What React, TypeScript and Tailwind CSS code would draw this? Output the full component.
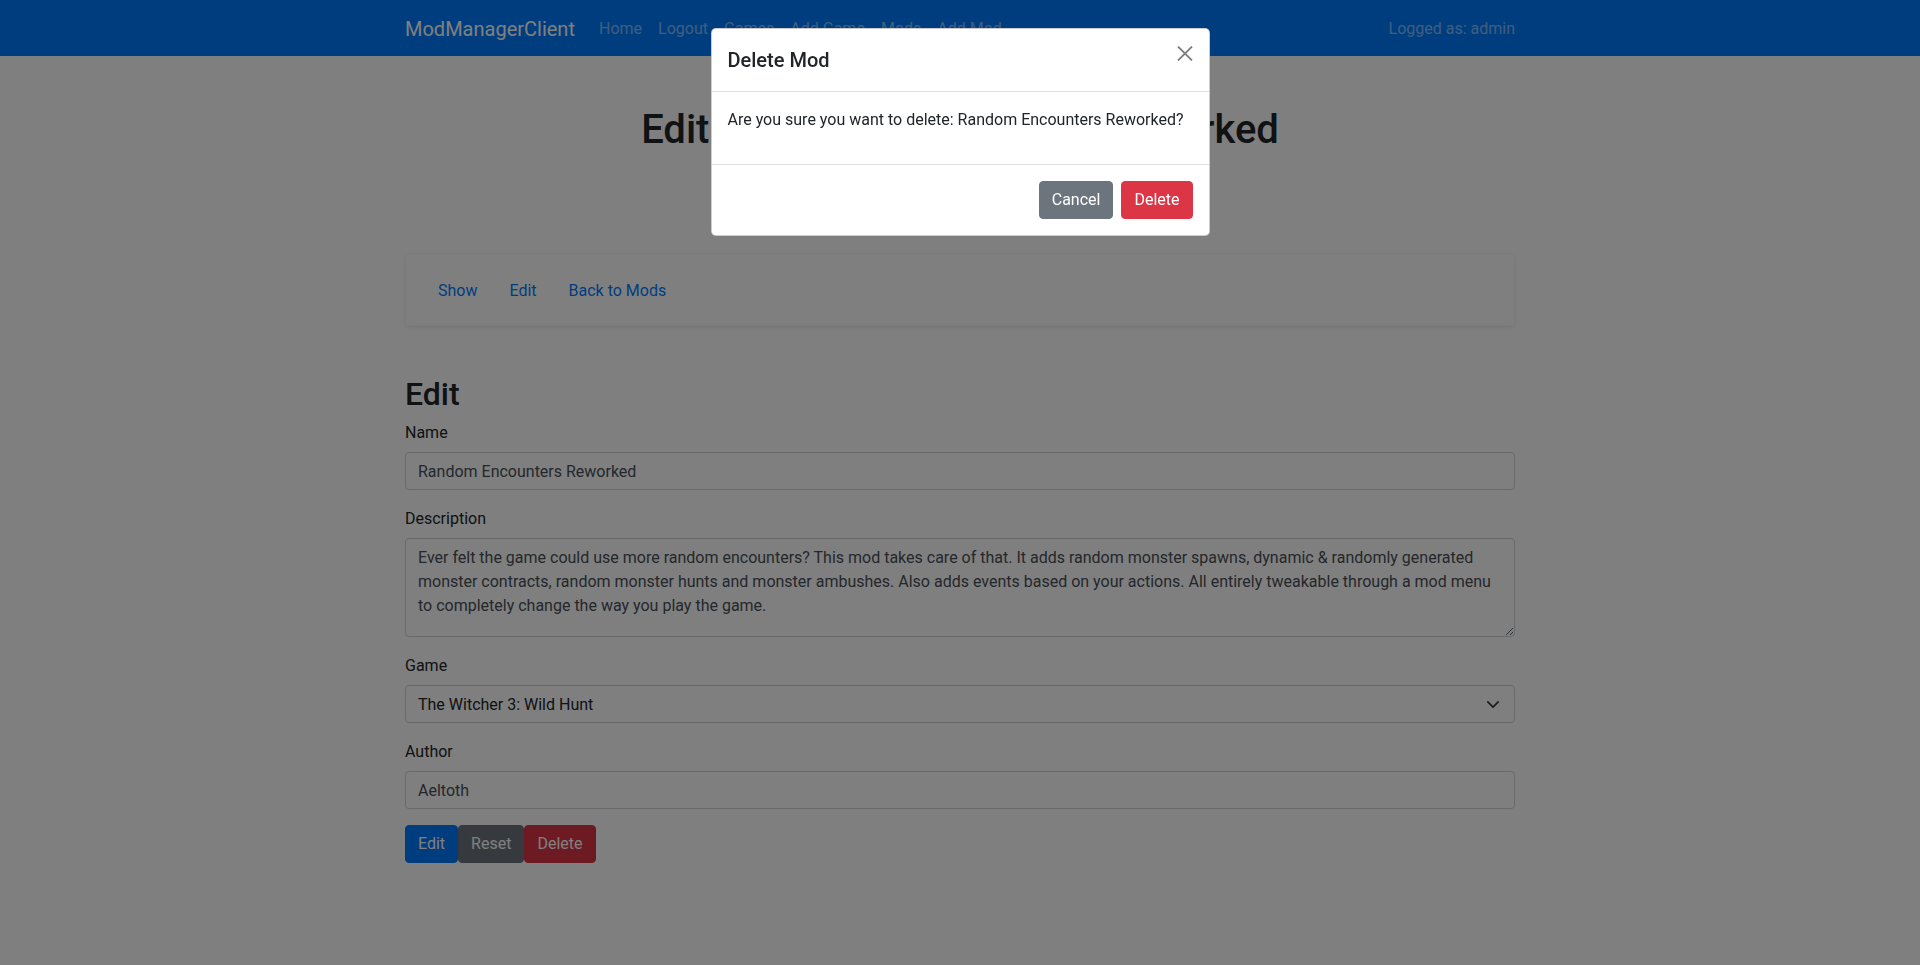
import React from 'react'

const navLinks = ['Home', 'Logout', 'Games', 'Add Game', 'Mods', 'Add Mod']

function Navbar() {
  return (
    <nav className="h-[56px] bg-[#007bff]">
      <div className="mx-auto flex h-full w-[1140px] items-center px-[15px] pt-[2px]">
        <a className="mr-4 text-[20px] leading-[30px] text-white">ModManagerClient</a>
        <ul className="flex">
          {navLinks.map((l) => (
            <li key={l}>
              <a className="block px-2 py-2 leading-6 text-white/50">{l}</a>
            </li>
          ))}
        </ul>
        <span className="ml-auto leading-6 text-white/50">Logged as: admin</span>
      </div>
    </nav>
  )
}

function Field({ label, children }: { label: string; children: React.ReactNode }) {
  return (
    <div className="mb-4">
      <label className="mb-[7px] block pt-px leading-6">{label}</label>
      {children}
    </div>
  )
}

function DeleteModal() {
  return (
    <>
      <div className="fixed inset-0 z-40 bg-black/50" />
      <div className="fixed inset-0 z-50">
        <div className="mx-auto mt-[28px] w-[499px] rounded-[5px] border border-black/20 bg-white">
          <div className="flex justify-between border-b border-[#dee2e6] p-4">
            <h5 className="text-[20px] font-medium leading-[30px]">Delete Mod</h5>
            <svg className="mt-px h-[15px] w-4 self-start" viewBox="0 0 16 15">
              <path d="M1 0.5L15 14.5M15 0.5L1 14.5" stroke="#7f7f7f" strokeWidth="1.8" />
            </svg>
          </div>
          <div className="p-4">
            <p className="mb-4 leading-6">Are you sure you want to delete: Random Encounters Reworked?</p>
          </div>
          <div className="flex items-center justify-end border-t border-[#dee2e6] p-3">
            <button className="m-1 rounded border border-[#6c757d] bg-[#6c757d] px-3 py-1.5 leading-6 text-white">
              Cancel
            </button>
            <button className="m-1 rounded border border-[#dc3545] bg-[#dc3545] px-3 py-1.5 leading-6 text-white">
              Delete
            </button>
          </div>
        </div>
      </div>
    </>
  )
}

export default function App() {
  return (
    <div className="min-h-screen bg-white font-[Roboto,'Noto_Sans',Arial,sans-serif] text-base text-[#212529]">
      <Navbar />
      <main className="mx-auto w-[1140px] px-[15px]">
        <h1 className="mt-[50px] text-center text-[40px] font-medium leading-[1.2]">
          Edit: Random Encounters Reworked
        </h1>

        <div className="mt-[99px] flex h-[73px] items-center rounded border border-black/[0.03] px-4 pt-[2px] shadow-[0_0.125rem_0.25rem_rgba(0,0,0,0.075)]">
          <a className="px-4 py-2 leading-6 text-[#007bff]">Show</a>
          <a className="px-4 py-2 leading-6 text-[#007bff]">Edit</a>
          <a className="px-4 py-2 leading-6 text-[#007bff]">Back to Mods</a>
        </div>

        <h2 className="mt-[49px] mb-[7px] text-[32px] font-medium leading-[1.2]">Edit</h2>

        <form>
          <Field label="Name">
            <input
              className="block h-[38px] w-full rounded border border-[#ced4da] px-3 pt-px leading-6 text-[#495057]"
              defaultValue="Random Encounters Reworked"
            />
          </Field>
          <Field label="Description">
            <textarea
              className="block h-[99px] w-full rounded border border-[#ced4da] px-3 pt-[7px] pb-1.5 leading-6 text-[#495057]"
              defaultValue="Ever felt the game could use more random encounters? This mod takes care of that. It adds random monster spawns, dynamic & randomly generated monster contracts, random monster hunts and monster ambushes. Also adds events based on your actions. All entirely tweakable through a mod menu to completely change the way you play the game."
            />
          </Field>
          <Field label="Game">
            <div className="flex h-[38px] w-full items-center justify-between rounded border border-[#ced4da] pl-3 pr-[15px] leading-6 text-[#212529]">
              <span className="pt-px">The Witcher 3: Wild Hunt</span>
              <svg className="h-[7px] w-[12px]" viewBox="1 4 14 8">
                <path d="M2 5l6 6 6-6" fill="none" stroke="#343a40" strokeWidth="2" strokeLinecap="round" strokeLinejoin="round" />
              </svg>
            </div>
          </Field>
          <Field label="Author">
            <input
              className="block h-[38px] w-full rounded border border-[#ced4da] px-3 pt-px leading-6 text-[#495057]"
              defaultValue="Aeltoth"
            />
          </Field>
          <div className="flex">
            <button type="button" className="rounded border border-[#007bff] bg-[#007bff] px-3 py-1.5 leading-6 text-white">
              Edit
            </button>
            <button type="button" className="rounded border border-[#6c757d] bg-[#6c757d] px-3 py-1.5 leading-6 text-white">
              Reset
            </button>
            <button type="button" className="rounded border border-[#dc3545] bg-[#dc3545] px-3 py-1.5 leading-6 text-white">
              Delete
            </button>
          </div>
        </form>
      </main>
      <DeleteModal />
    </div>
  )
}
